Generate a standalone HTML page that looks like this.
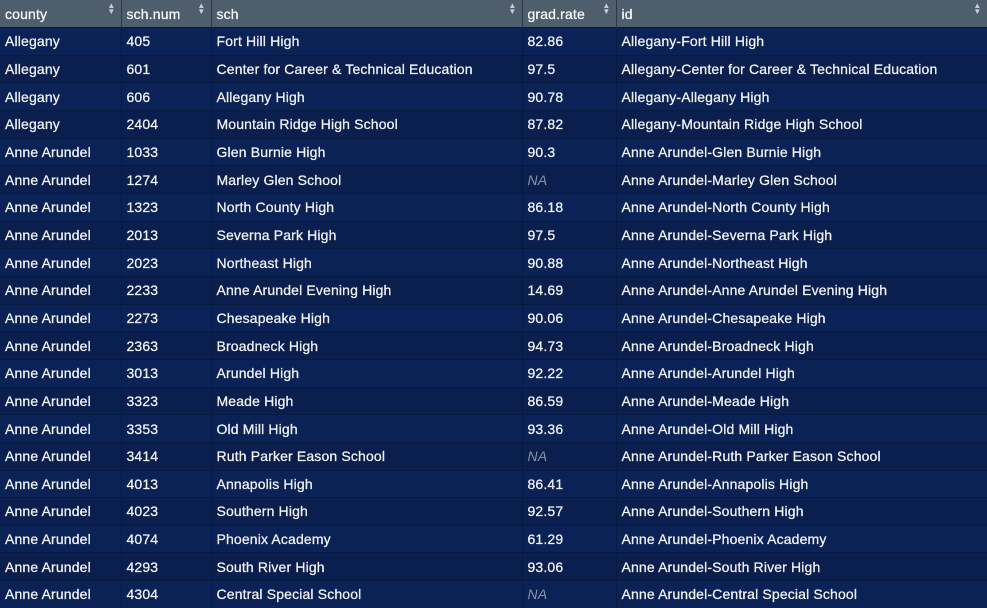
<!DOCTYPE html>
<html><head><style>
body{margin:0;background:#0b2152;width:987px;height:608px;overflow:hidden;font-family:"Liberation Sans",sans-serif;font-size:14px;letter-spacing:0.15px;color:#f2f4f8;-webkit-text-stroke:0.25px #f2f4f8}
table{border-collapse:collapse;width:987px;table-layout:fixed}
th{background:#4f5e6c;height:27px;text-align:left;font-weight:normal;padding:0 5px;border-right:1px solid #2c3a48;position:relative;color:#fff;font-size:14px}
th span{position:absolute;right:5px;top:3px;font-size:8px;color:#c8ced4;line-height:6px;-webkit-text-stroke:0}
td{height:26.67px;padding:0 5px;border-right:1px solid #071a40;border-top:1px solid #071a40;white-space:nowrap;overflow:hidden}
tr:nth-child(odd) td{background:#0a2255}
tr:nth-child(even) td{background:#0b1f4e}
.na{color:#8a93a6;font-style:italic;-webkit-text-stroke:0}
</style></head><body>
<table>
<colgroup><col style="width:121px"><col style="width:90px"><col style="width:311px"><col style="width:94px"><col style="width:371px"></colgroup>
<thead><tr><th>county<span>▲<br>▼</span></th><th>sch.num<span>▲<br>▼</span></th><th>sch<span>▲<br>▼</span></th><th>grad.rate<span>▲<br>▼</span></th><th>id<span>▲<br>▼</span></th></tr></thead>
<tbody>
<tr><td>Allegany</td><td>405</td><td>Fort Hill High</td><td>82.86</td><td>Allegany-Fort Hill High</td></tr>
<tr><td>Allegany</td><td>601</td><td>Center for Career &amp; Technical Education</td><td>97.5</td><td>Allegany-Center for Career &amp; Technical Education</td></tr>
<tr><td>Allegany</td><td>606</td><td>Allegany High</td><td>90.78</td><td>Allegany-Allegany High</td></tr>
<tr><td>Allegany</td><td>2404</td><td>Mountain Ridge High School</td><td>87.82</td><td>Allegany-Mountain Ridge High School</td></tr>
<tr><td>Anne Arundel</td><td>1033</td><td>Glen Burnie High</td><td>90.3</td><td>Anne Arundel-Glen Burnie High</td></tr>
<tr><td>Anne Arundel</td><td>1274</td><td>Marley Glen School</td><td class="na">NA</td><td>Anne Arundel-Marley Glen School</td></tr>
<tr><td>Anne Arundel</td><td>1323</td><td>North County High</td><td>86.18</td><td>Anne Arundel-North County High</td></tr>
<tr><td>Anne Arundel</td><td>2013</td><td>Severna Park High</td><td>97.5</td><td>Anne Arundel-Severna Park High</td></tr>
<tr><td>Anne Arundel</td><td>2023</td><td>Northeast High</td><td>90.88</td><td>Anne Arundel-Northeast High</td></tr>
<tr><td>Anne Arundel</td><td>2233</td><td>Anne Arundel Evening High</td><td>14.69</td><td>Anne Arundel-Anne Arundel Evening High</td></tr>
<tr><td>Anne Arundel</td><td>2273</td><td>Chesapeake High</td><td>90.06</td><td>Anne Arundel-Chesapeake High</td></tr>
<tr><td>Anne Arundel</td><td>2363</td><td>Broadneck High</td><td>94.73</td><td>Anne Arundel-Broadneck High</td></tr>
<tr><td>Anne Arundel</td><td>3013</td><td>Arundel High</td><td>92.22</td><td>Anne Arundel-Arundel High</td></tr>
<tr><td>Anne Arundel</td><td>3323</td><td>Meade High</td><td>86.59</td><td>Anne Arundel-Meade High</td></tr>
<tr><td>Anne Arundel</td><td>3353</td><td>Old Mill High</td><td>93.36</td><td>Anne Arundel-Old Mill High</td></tr>
<tr><td>Anne Arundel</td><td>3414</td><td>Ruth Parker Eason School</td><td class="na">NA</td><td>Anne Arundel-Ruth Parker Eason School</td></tr>
<tr><td>Anne Arundel</td><td>4013</td><td>Annapolis High</td><td>86.41</td><td>Anne Arundel-Annapolis High</td></tr>
<tr><td>Anne Arundel</td><td>4023</td><td>Southern High</td><td>92.57</td><td>Anne Arundel-Southern High</td></tr>
<tr><td>Anne Arundel</td><td>4074</td><td>Phoenix Academy</td><td>61.29</td><td>Anne Arundel-Phoenix Academy</td></tr>
<tr><td>Anne Arundel</td><td>4293</td><td>South River High</td><td>93.06</td><td>Anne Arundel-South River High</td></tr>
<tr><td>Anne Arundel</td><td>4304</td><td>Central Special School</td><td class="na">NA</td><td>Anne Arundel-Central Special School</td></tr>
</tbody></table>
</body></html>
